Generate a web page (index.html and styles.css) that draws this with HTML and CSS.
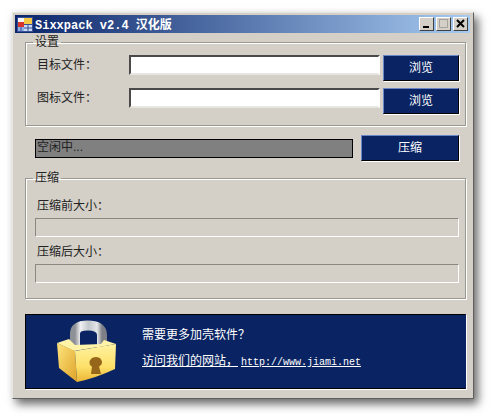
FILE: index.html
```html
<!DOCTYPE html>
<html lang="zh-CN">
<head>
  <meta charset="UTF-8">
  <title>Sixxpack v2.4 汉化版</title>
  <link rel="stylesheet" href="styles.css">
</head>
<body>

  <div class="window">
    <div class="titlebar">
      <svg class="app-icon" width="16" height="15" viewBox="0 0 16 15">
        <rect x="0" y="0" width="16" height="15" fill="#3a4f96"/>
        <rect x="1" y="1" width="6" height="5" fill="#f4f4f4"/>
        <rect x="7" y="1" width="8" height="6" fill="#f6c945"/>
        <rect x="1" y="5" width="6" height="5" fill="#d8342c"/>
        <rect x="7" y="8" width="8" height="6" fill="#c9dcf4"/>
        <rect x="1" y="10" width="6" height="4" fill="#8fb0e6"/>
        <path d="M4 10v4M11 8v6M7 11h8" stroke="#3a4f96" fill="none"/>
      </svg>
      <span class="title">Sixxpack v2.4 <span class="title-cn">汉化版</span></span>
      <div class="caption-btns">
        <div class="caption-btn">
          <svg width="15" height="14" viewBox="0 0 15 14"><rect x="4" y="9" width="6" height="2" fill="#000"/></svg>
        </div>
        <div class="caption-btn">
          <svg width="15" height="14" viewBox="0 0 15 14"><path d="M3.5 2.5h8v8h-8z" fill="none" stroke="#a5a29b"/><path d="M3 2.5h9" stroke="#a5a29b"/></svg>
        </div>
        <div class="caption-btn close">
          <svg width="15" height="14" viewBox="0 0 15 14"><path d="M4 3l7 7M11 3l-7 7" stroke="#000" stroke-width="2" fill="none"/></svg>
        </div>
      </div>
    </div>

    <div class="content">
      <fieldset class="group">
        <legend>设置</legend>
        <div class="file-grid">
          <label class="file-label">目标文件：</label>
          <div class="text-input"></div>
          <button class="blue-btn">浏览</button>
          <label class="file-label">图标文件：</label>
          <div class="text-input"></div>
          <button class="blue-btn">浏览</button>
        </div>
      </fieldset>

      <div class="status-row">
        <div class="status">空闲中...</div>
        <button class="blue-btn pack-btn">压缩</button>
      </div>

      <fieldset class="group sizes">
        <legend>压缩</legend>
        <div class="size-label">压缩前大小：</div>
        <div class="size-field"></div>
        <div class="size-label second">压缩后大小：</div>
        <div class="size-field"></div>
      </fieldset>

      <div class="banner">
        <svg class="lock" width="60" height="63" viewBox="57 320 60 63">
          <defs>
            <linearGradient id="steel" x1="0" y1="0" x2="1" y2="0">
              <stop offset="0" stop-color="#8d9096"/>
              <stop offset="0.2" stop-color="#f0f1f3"/>
              <stop offset="0.5" stop-color="#c4c7cb"/>
              <stop offset="0.82" stop-color="#e4e6e8"/>
              <stop offset="1" stop-color="#7d8086"/>
            </linearGradient>
            <linearGradient id="brass" x1="0" y1="0" x2="0" y2="1">
              <stop offset="0" stop-color="#fff2a0"/>
              <stop offset="0.6" stop-color="#fde069"/>
              <stop offset="1" stop-color="#eab435"/>
            </linearGradient>
            <linearGradient id="brass-side" x1="0" y1="0" x2="1" y2="1">
              <stop offset="0" stop-color="#fee57e"/>
              <stop offset="1" stop-color="#dfa228"/>
            </linearGradient>
          </defs>
          <path d="M75 350 V334 C75 327 81 325.500 88 325.500 C96 325.500 102 328 102 335 V348" fill="none" stroke="url(#steel)" stroke-width="10"/>
          <path d="M57 343 L69 339 L75 345 L101 344 L104 340 L116 344 L74 351 Z" fill="#fff3a8"/>
          <path d="M57 343 L75 351 L77 382 L59 368 Z" fill="url(#brass-side)"/>
          <path d="M75 351 L116 344 L115 369 Q96 378 77 382 Z" fill="url(#brass)"/>
          <path d="M96 357 C100 357 102 360 102 362.500 C102 364.500 100 366 99 366.500 L101 374 H91 L92 366.500 C90.500 366 89.500 364.500 89.500 362.500 C89.500 360 92 357 96 357 Z" fill="#96661a"/>
        </svg>
        <div class="banner-text">
          <div>需要更多加壳软件？</div>
          <a class="banner-link">访问我们的网站，<span class="url">http://www.jiami.net</span></a>
        </div>
      </div>
    </div>
  </div>

</body>
</html>
```

FILE: styles.css
```css
* {
  box-sizing: border-box;
}

html, body {
  margin: 0;
  height: 100%;
  background: #fff;
}

body {
  padding: 12px 0 0 12px;
  font-family: "Liberation Sans", "Noto Sans CJK SC", sans-serif;
  font-size: 12px;
  color: #222;
  overflow: hidden;
}

.window {
  width: 462px;
  height: 387px;
  padding: 3px;
  background: #d4d0c8;
  border-top: 1px solid #e8e6e0;
  border-left: 1px solid #e8e6e0;
  border-right: 1px solid #5f5f5f;
  border-bottom: 1px solid #5f5f5f;
  box-shadow: 4px 5px 9px rgba(0, 0, 0, 0.6);
}

.titlebar {
  display: flex;
  align-items: center;
  height: 18px;
  margin: -1px 0 0 -1px;
  padding: 0 2px;
  background: linear-gradient(90deg, #0a246a, #a6caf0);
}

.app-icon {
  flex: none;
}

.title {
  margin-left: 2px;
  font-family: "Liberation Mono", "Noto Sans CJK SC", monospace;
  font-size: 12px;
  font-weight: bold;
  color: #fff;
}

.title-cn {
  font-family: "Noto Sans CJK SC", sans-serif;
}

.caption-btns {
  display: flex;
  gap: 2px;
  margin-left: auto;
}

.caption-btn {
  width: 15px;
  height: 14px;
  background: #d4d0c8;
  border: 1px solid;
  border-color: #fff #404040 #404040 #fff;
  display: flex;
  align-items: center;
  justify-content: center;
}

.caption-btn svg {
  flex: none;
}

.content {
  padding: 2px 6px 0 9px;
}

.group {
  margin: 0;
  padding: 6px 6px 11px 11px;
  width: 441px;
  border: 1px solid #9a9890;
  box-shadow: 1px 1px 0 #fff, inset 1px 1px 0 #fff;
}

.group legend {
  margin-left: -4px;
  padding: 0 2px;
  font-size: 12px;
  line-height: 14px;
}

.file-grid {
  display: grid;
  grid-template-columns: 89px 251px 76px;
  column-gap: 3px;
  row-gap: 7px;
}

.file-grid .file-label {
  height: 20px;
  line-height: 20px;
}

.text-input {
  height: 20px;
  background: #fff;
  border: 2px solid;
  border-color: #4a4a4a #fff #e8e6e0 #4a4a4a;
}

.blue-btn {
  height: 26px;
  padding: 0 0 3px;
  background: #0a2463;
  color: #fff;
  font-family: inherit;
  font-size: 12px;
  border: 1px solid;
  border-color: #6a86c8 #000 #000 #6a86c8;
  box-shadow: 1px 1px 0 #fff;
}

.status-row {
  display: flex;
  align-items: center;
  justify-content: space-between;
  width: 434px;
  margin: 9px 0 10px 0;
  padding-left: 10px;
}

.status {
  width: 318px;
  height: 19px;
  padding-left: 1px;
  line-height: 15px;
  background: #808080;
  border: 1px solid #000;
  color: #222;
}

.pack-btn {
  width: 98px;
}

.sizes {
  padding: 13px 6px 15px 9px;
}

.sizes legend {
  margin-left: -2px;
}

.size-label {
  height: 14px;
  line-height: 14px;
  margin: 1px 0 5px 2px;
}

.size-label.second {
  margin-top: 8px;
}

.size-field {
  width: 424px;
  height: 19px;
  border: 1px solid;
  border-color: #8a887f #fff #fff #8a887f;
}

.banner {
  display: flex;
  align-items: center;
  width: 441px;
  height: 75px;
  margin-top: 15px;
  padding-left: 31px;
  background: #0a2463;
  border: 1px solid #000;
  border-right-color: #0a2463;
  box-shadow: 1px 1px 0 #fff;
  color: #fff;
}

.lock {
  flex: none;
}

.banner-text {
  margin-left: 25px;
  padding-bottom: 5px;
  display: flex;
  flex-direction: column;
  gap: 9px;
  line-height: 17px;
}

.banner-link {
  text-decoration: underline;
}

.url {
  padding-left: 3px;
  font-family: "Liberation Mono", monospace;
  font-size: 10px;
}
```
